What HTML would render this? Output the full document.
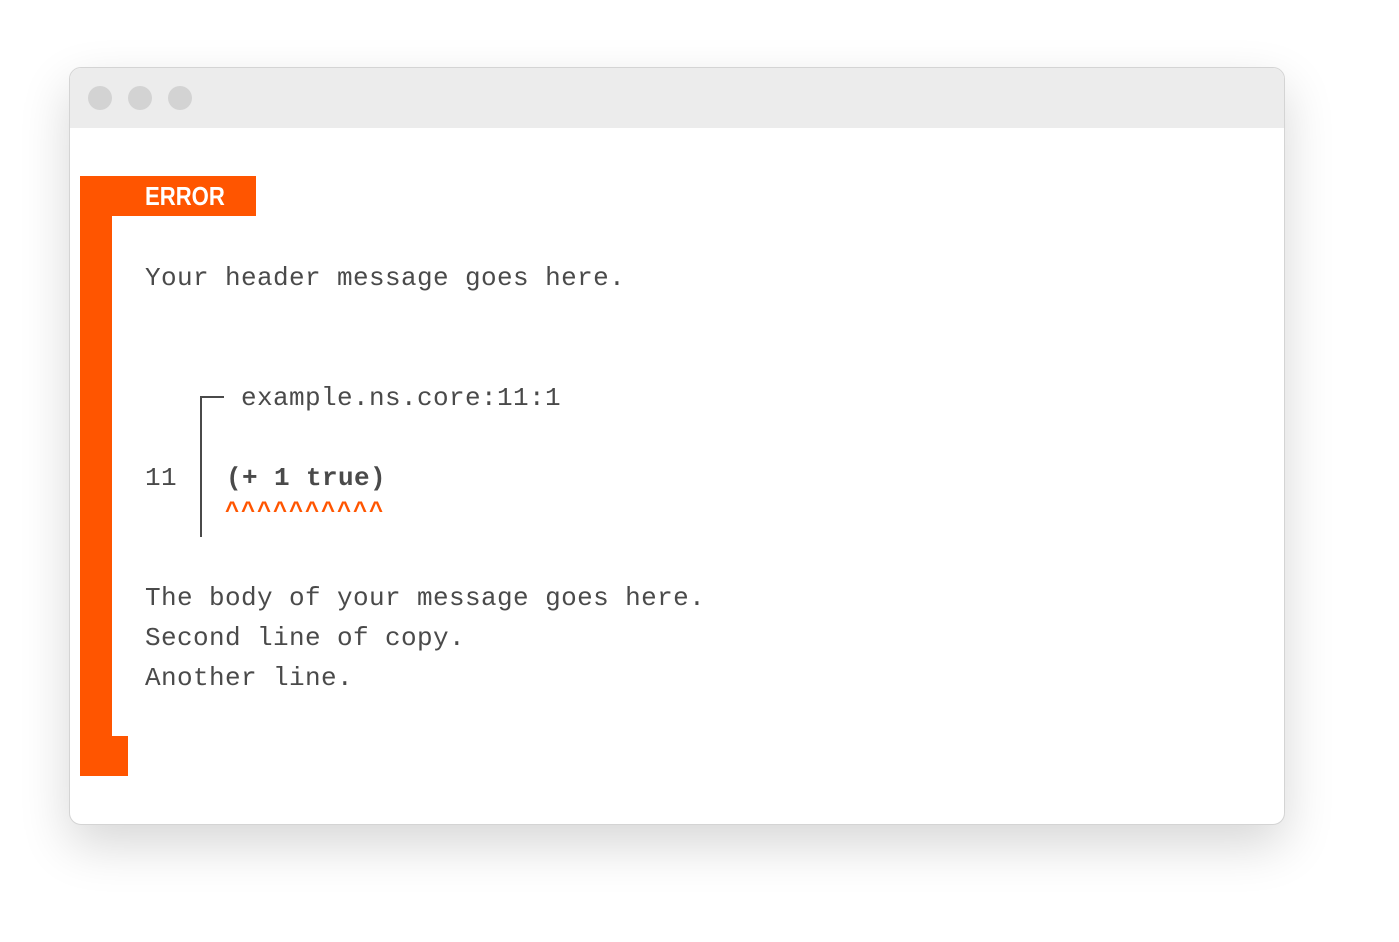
<!DOCTYPE html>
<html><head><style>
body{margin:0;width:1399px;height:942px;background:#fff;position:relative;overflow:hidden;font-family:"Liberation Mono",monospace;}
.win{position:absolute;left:69px;top:67px;width:1214px;height:756px;border:1px solid #d4d4d4;border-radius:12px;background:#fff;box-shadow:0 20px 50px rgba(0,0,0,0.16);overflow:hidden;}
.bar{position:absolute;left:0;top:0;width:100%;height:60px;background:#ececec;}
.dot{position:absolute;top:18px;width:24px;height:24px;border-radius:50%;background:#d3d3d3;}
.o{position:absolute;background:#ff5500;}
.t{position:absolute;font-size:26px;letter-spacing:0.4px;color:#4a4a4a;white-space:pre;line-height:1;}
</style></head><body>
<div class="win">
<div class="bar"><div class="dot" style="left:18px"></div><div class="dot" style="left:58px"></div><div class="dot" style="left:98px"></div></div>
</div>
<div class="o" style="left:80px;top:176px;width:176px;height:40px"></div>
<div class="o" style="left:80px;top:176px;width:32px;height:600px"></div>
<div class="o" style="left:80px;top:736px;width:48px;height:40px"></div>
<div style="position:absolute;left:145px;top:181px;font:bold 26px 'Liberation Sans',sans-serif;color:#fff;transform:scaleX(0.85);transform-origin:left;">ERROR</div>
<div class="t" style="left:145px;top:265px">Your header message goes here.</div>
<div style="position:absolute;left:200px;top:396px;width:2px;height:141px;background:#4a4a4a"></div>
<div style="position:absolute;left:200px;top:396px;width:24px;height:2px;background:#4a4a4a"></div>
<div class="t" style="left:241px;top:385px">example.ns.core:11:1</div>
<div class="t" style="left:145px;top:465px">11</div>
<div class="t" style="left:226px;top:465px;font-weight:bold">(+ 1 true)</div>
<div class="t" style="left:225px;top:501px;font-weight:bold;color:#ff5500;font-size:24px;letter-spacing:1.6px">^^^^^^^^^^</div>
<div class="t" style="left:145px;top:585px">The body of your message goes here.</div>
<div class="t" style="left:145px;top:625px">Second line of copy.</div>
<div class="t" style="left:145px;top:665px">Another line.</div>
</body></html>
